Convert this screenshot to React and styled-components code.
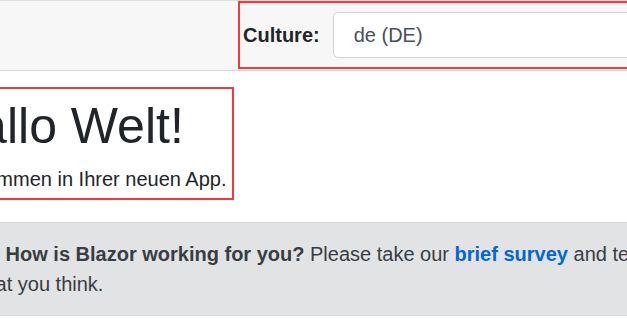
import React from 'react';
import styled, { createGlobalStyle } from 'styled-components';

const GlobalStyle = createGlobalStyle`
  html, body {
    margin: 0;
    padding: 0;
    background: #fff;
  }
  body {
    font-family: "Liberation Sans", Arial, sans-serif;
    font-size: 20px;
    line-height: 1.5;
    color: #212529;
    overflow: hidden;
  }
`;

const Page = styled.div`
  width: 627px;
  height: 319px;
  overflow: hidden;
`;

const TopRow = styled.header`
  height: 71px;
  box-sizing: border-box;
  background: #f7f7f7;
  border-top: 1px solid #dedede;
  border-bottom: 1px solid #d6d5d5;
  padding-left: 238px;
  display: flex;
`;

const Highlight = styled.div`
  border: 2px solid #f23a3a;
  box-sizing: border-box;
`;

const CultureBox = styled(Highlight)`
  flex: none;
  width: 480px;
  height: 68px;
  display: flex;
  align-items: center;
  gap: 13px;
  padding-left: 3px;
`;

const Label = styled.label`
  font-weight: 700;
  font-size: 20px;
  color: #212529;
`;

const Select = styled.select`
  appearance: none;
  width: 420px;
  height: 46px;
  box-sizing: border-box;
  border: 1px solid #ced4da;
  border-radius: 5px;
  background: #fff;
  padding: 0 20px;
  font-family: inherit;
  font-size: 20px;
  color: #495057;
`;

const Content = styled(Highlight)`
  width: fit-content;
  margin: 16px 0 0 -88px;
  padding: 7px 6px 4px 29px;
`;

const Title = styled.h1`
  margin: 0 0 8px;
  font-size: 50px;
  font-weight: 500;
  line-height: 1.2;
`;

const Lead = styled.p`
  margin: 0;
`;

const Alert = styled.div`
  width: 720px;
  margin: 22px 0 0 -56px;
  padding: 16px 25px;
  background: #e2e3e5;
  border: 1px solid #d6d8db;
  border-radius: 5px;
  color: #383d41;
`;

const PencilIcon = styled.svg`
  display: inline-block;
  width: 20px;
  height: 20px;
  margin-right: 10px;
  vertical-align: -2px;
  fill: #383d41;
`;

const AlertLink = styled.a`
  color: #0366d6;
  font-weight: 700;
  text-decoration: none;
`;

export default function App() {
  return (
    <Page>
      <GlobalStyle />
      <TopRow>
        <CultureBox>
          <Label htmlFor="culture">Culture:</Label>
          <Select id="culture" defaultValue="de-DE">
            <option value="en-US">en (US)</option>
            <option value="de-DE">de (DE)</option>
          </Select>
        </CultureBox>
      </TopRow>

      <Content>
        <Title>Hallo Welt!</Title>
        <Lead>Willkommen in Ihrer neuen App.</Lead>
      </Content>

      <Alert>
        <PencilIcon viewBox="0 0 8 8" aria-hidden="true">
          <path d="M6 0L5 1l2 2 1-1-2-2zM4 2L0 6v2h2l4-4-2-2z" />
        </PencilIcon>{' '}
        <strong>How is Blazor working for you?</strong> Please take our{' '}
        <AlertLink href="#">brief survey</AlertLink> and tell us what you think.
      </Alert>
    </Page>
  );
}
